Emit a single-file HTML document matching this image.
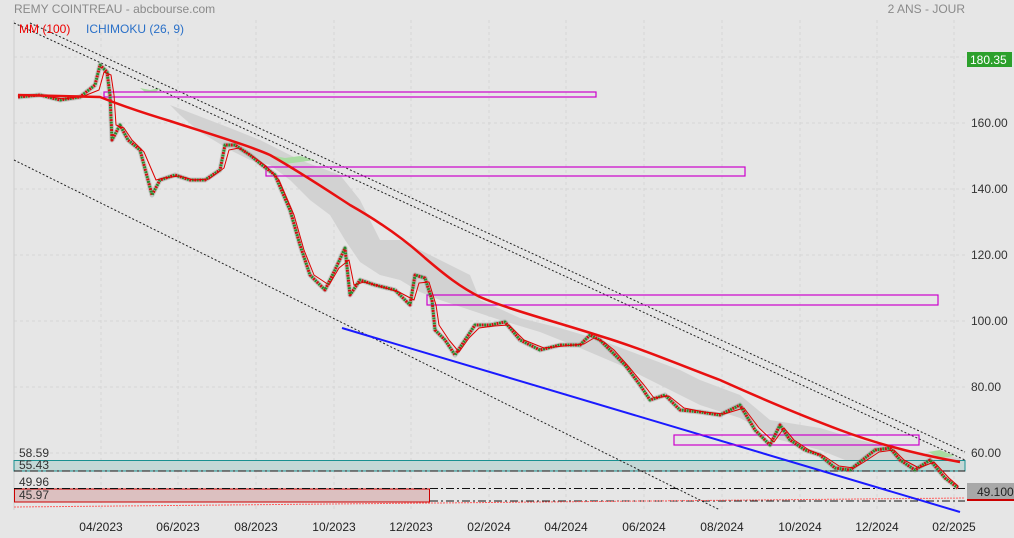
<!DOCTYPE html>
<html><head><meta charset="utf-8"><style>
html,body{margin:0;padding:0;background:#e6e6e6;}
body{width:1014px;height:538px;overflow:hidden;font-family:"Liberation Sans",sans-serif;}
svg{display:block}
</style></head><body>
<svg width="1014" height="538" xmlns="http://www.w3.org/2000/svg">
<rect width="1014" height="538" fill="#e6e6e6"/>
<g stroke="#d6d6d6" stroke-width="1" stroke-dasharray="3,3">
<line x1="14" y1="57" x2="965" y2="57"/><line x1="14" y1="123" x2="965" y2="123"/><line x1="14" y1="189" x2="965" y2="189"/><line x1="14" y1="255" x2="965" y2="255"/><line x1="14" y1="321" x2="965" y2="321"/><line x1="14" y1="387" x2="965" y2="387"/><line x1="14" y1="453" x2="965" y2="453"/>
<line x1="101" y1="20" x2="101" y2="510"/><line x1="178" y1="20" x2="178" y2="510"/><line x1="256" y1="20" x2="256" y2="510"/><line x1="334" y1="20" x2="334" y2="510"/><line x1="411" y1="20" x2="411" y2="510"/><line x1="489" y1="20" x2="489" y2="510"/><line x1="566" y1="20" x2="566" y2="510"/><line x1="644" y1="20" x2="644" y2="510"/><line x1="722" y1="20" x2="722" y2="510"/><line x1="800" y1="20" x2="800" y2="510"/><line x1="877" y1="20" x2="877" y2="510"/><line x1="954" y1="20" x2="954" y2="510"/>
</g>
<line x1="14" y1="20" x2="14" y2="510" stroke="#cfcfcf"/>
<polygon fill="#d2d2d2" points="170,105 230,128 260,140 300,160 340,175 360,200 380,240 400,240 430,255 470,275 480,300 520,318 560,328 600,340 640,355 680,370 700,380 740,395 770,420 820,428 860,440 900,450 960,458 960,462 900,470 860,466 820,450 780,440 740,418 700,405 660,385 620,365 580,348 540,332 500,320 470,310 440,300 420,292 400,280 380,275 360,262 345,240 330,215 310,200 290,180 270,165 250,160 230,150 200,132 180,115"/>
<polygon fill="#a8dca0" points="140,88 150,90 160,88 156,92 145,92"/>
<polygon fill="#a8dca0" points="270,155 285,158 300,156 315,160 300,162 285,164"/>
<polygon fill="#a8dca0" points="928,452 940,450 955,456 940,458"/>
<rect x="14" y="460.5" width="951" height="10.5" fill="#c4d8d6" stroke="#1a9090" stroke-width="1"/>
<rect x="14.5" y="489" width="415" height="13" fill="#dcc0c0" stroke="#cc0000" stroke-width="1"/>
<g stroke="#111" stroke-width="1" stroke-dasharray="8,3,2,3">
<line x1="14" y1="471" x2="965" y2="471"/><line x1="14" y1="488.5" x2="965" y2="488.5"/><line x1="430" y1="501" x2="965" y2="501"/>
</g>
<line x1="14" y1="507" x2="965" y2="498" stroke="#ff6060" stroke-width="1" stroke-dasharray="2,1"/>
<g stroke="#222" stroke-width="1" stroke-dasharray="2,2" fill="none">
<line x1="14" y1="23" x2="965" y2="460"/><line x1="30" y1="23" x2="965" y2="452"/>
<line x1="14" y1="160" x2="720" y2="510"/>
</g>
<line x1="342" y1="328" x2="960" y2="512" stroke="#1a1aff" stroke-width="2"/>
<g fill="none" stroke="#cc00cc" stroke-width="1.2">
<rect x="104" y="92" width="492" height="5"/><rect x="266" y="167" width="479" height="9"/><rect x="427" y="295" width="511" height="10"/><rect x="674" y="435" width="245" height="10"/>
</g>
<g fill="none" stroke-linejoin="round">
<polyline stroke="#888" stroke-width="5" stroke-opacity="0.35" points="18,97 40,95 60,100 80,97 95,85 100,65 107,72 110,95 112,140 120,125 128,140 140,150 152,195 160,180 175,175 190,180 205,180 220,170 225,145 235,145 250,155 262,165 275,175 290,210 300,245 310,275 325,290 335,270 345,248 350,295 360,280 375,285 395,290 410,305 415,275 425,278 432,300 435,330 445,340 455,355 465,340 475,325 490,325 505,322 520,340 540,350 560,345 580,345 590,335 600,340 610,350 625,365 640,385 650,400 665,395 680,410 700,412 720,415 740,405 755,430 770,445 780,425 790,440 805,450 820,455 835,468 850,470 860,462 875,450 890,448 900,460 915,470 930,460 945,478 958,488"/>
<polyline stroke="#cc1111" stroke-width="3" stroke-dasharray="2,3" points="18,97 40,95 60,100 80,97 95,85 100,65 107,72 110,95 112,140 120,125 128,140 140,150 152,195 160,180 175,175 190,180 205,180 220,170 225,145 235,145 250,155 262,165 275,175 290,210 300,245 310,275 325,290 335,270 345,248 350,295 360,280 375,285 395,290 410,305 415,275 425,278 432,300 435,330 445,340 455,355 465,340 475,325 490,325 505,322 520,340 540,350 560,345 580,345 590,335 600,340 610,350 625,365 640,385 650,400 665,395 680,410 700,412 720,415 740,405 755,430 770,445 780,425 790,440 805,450 820,455 835,468 850,470 860,462 875,450 890,448 900,460 915,470 930,460 945,478 958,488"/>
<polyline stroke="#2a8a2a" stroke-width="3" stroke-dasharray="2,3" stroke-dashoffset="2.5" points="18,97 40,95 60,100 80,97 95,85 100,65 107,72 110,95 112,140 120,125 128,140 140,150 152,195 160,180 175,175 190,180 205,180 220,170 225,145 235,145 250,155 262,165 275,175 290,210 300,245 310,275 325,290 335,270 345,248 350,295 360,280 375,285 395,290 410,305 415,275 425,278 432,300 435,330 445,340 455,355 465,340 475,325 490,325 505,322 520,340 540,350 560,345 580,345 590,335 600,340 610,350 625,365 640,385 650,400 665,395 680,410 700,412 720,415 740,405 755,430 770,445 780,425 790,440 805,450 820,455 835,468 850,470 860,462 875,450 890,448 900,460 915,470 930,460 945,478 958,488"/>
<polyline stroke="#dd0000" stroke-width="1" points="22,95 44,96 64,99 84,96 99,90 104,72 111,75 114,95 116,125 124,128 132,140 144,152 156,180 164,178 179,176 194,180 209,179 224,168 229,150 239,148 254,157 266,166 279,180 294,215 304,250 314,275 329,285 339,268 349,260 354,285 364,282 379,286 399,292 414,300 419,283 429,282 436,305 439,325 449,340 459,352 469,338 479,328 494,326 509,325 524,340 544,348 564,346 584,344 594,338 604,342 614,350 629,367 644,385 654,398 669,396 684,408 704,412 724,414 744,408 759,428 774,442 784,428 794,440 809,450 824,456 839,466 854,468 864,462 879,452 894,450 904,460 919,468 934,462 949,478 958,486"/>
</g>
<path fill="none" stroke="#e81010" stroke-width="2.5" d="M18,95 L100,97 C120,105 140,112 170,121 C210,134 250,146 270,155 C300,172 330,192 350,205 C380,222 405,240 425,258 C445,275 460,287 480,297 C510,310 560,323 600,336 C640,348 680,365 720,380 C760,398 800,415 840,430 C880,445 920,455 960,462"/>
<text x="14" y="13" font-size="12" fill="#8a8a8a">REMY COINTREAU - abcbourse.com</text>
<text x="965" y="13" font-size="12" fill="#8a8a8a" text-anchor="end">2 ANS - JOUR</text>
<text x="19" y="33" font-size="12" fill="#ee0000">MM (100)</text>
<text x="86" y="33" font-size="12" fill="#2a70c8">ICHIMOKU (26, 9)</text>
<g font-size="12" fill="#333">
<text x="971" y="127">160.00</text><text x="971" y="193">140.00</text><text x="971" y="259">120.00</text><text x="971" y="325">100.00</text><text x="971" y="391">80.00</text><text x="971" y="457">60.00</text>
<text x="19" y="457">58.59</text><text x="19" y="469">55.43</text><text x="19" y="486">49.96</text><text x="19" y="499">45.97</text>
</g>
<rect x="967" y="52" width="45" height="15" fill="#2ca02c"/>
<text x="970" y="64" font-size="12" fill="#fff">180.35</text>
<rect x="967" y="483" width="47" height="16" fill="#a8a8a8"/>
<rect x="967" y="499" width="47" height="2" fill="#cc0000"/>
<text x="977" y="496" font-size="12" fill="#222">49.100</text>
<g font-size="12" fill="#222" text-anchor="middle">
<text x="101" y="531">04/2023</text><text x="178" y="531">06/2023</text><text x="256" y="531">08/2023</text><text x="334" y="531">10/2023</text><text x="411" y="531">12/2023</text><text x="489" y="531">02/2024</text><text x="566" y="531">04/2024</text><text x="644" y="531">06/2024</text><text x="722" y="531">08/2024</text><text x="800" y="531">10/2024</text><text x="877" y="531">12/2024</text><text x="954" y="531">02/2025</text>
</g>
</svg>
</body></html>
